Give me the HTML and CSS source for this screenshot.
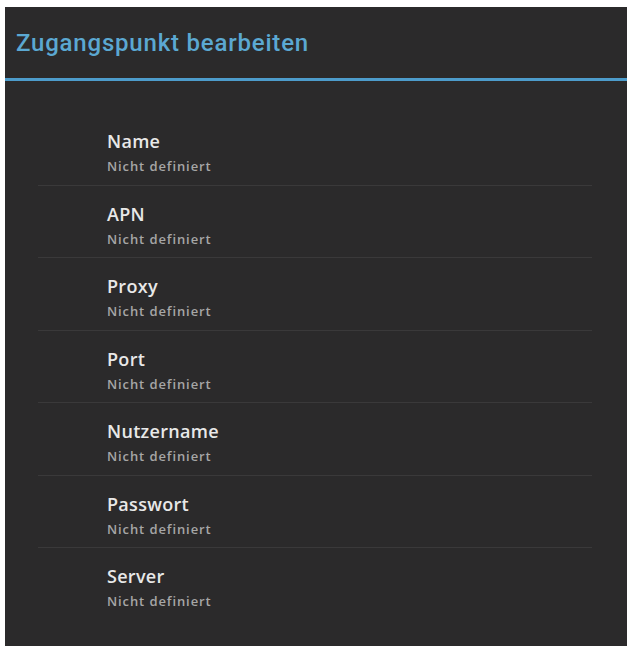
FILE: index.html
```html
<!DOCTYPE html>
<html>
<head>
  <title>Zugangspunkt bearbeiten</title>
  <link rel="stylesheet" href="styles.css">
</head>
<body>
  <div class="screen">
    <div class="action-bar">
      <h1 class="action-title">Zugangspunkt bearbeiten</h1>
    </div>

    <ul class="pref-list">
      <li class="pref">
        <div class="pref-title">Name</div>
        <div class="pref-summary">Nicht definiert</div>
      </li>
      <li class="pref">
        <div class="pref-title">APN</div>
        <div class="pref-summary">Nicht definiert</div>
      </li>
      <li class="pref">
        <div class="pref-title">Proxy</div>
        <div class="pref-summary">Nicht definiert</div>
      </li>
      <li class="pref">
        <div class="pref-title">Port</div>
        <div class="pref-summary">Nicht definiert</div>
      </li>
      <li class="pref">
        <div class="pref-title">Nutzername</div>
        <div class="pref-summary">Nicht definiert</div>
      </li>
      <li class="pref">
        <div class="pref-title">Passwort</div>
        <div class="pref-summary">Nicht definiert</div>
      </li>
      <li class="pref">
        <div class="pref-title">Server</div>
        <div class="pref-summary">Nicht definiert</div>
      </li>
    </ul>
  </div>
</body>
</html>
```

FILE: styles.css
```css
/* Grundlayout */
body {
  margin: 0;
  padding: 7px 2px 3px 5px;
  background-color: #ffffff;
  font-family: "Open Sans", "Liberation Sans", sans-serif;
}

/* Dunkles Panel */
.screen {
  height: 639px;
  background-color: #2b2a2b;
  box-sizing: border-box;
}

/* Titelleiste */
.action-bar {
  height: 71px;
  display: flex;
  align-items: center;
  padding-left: 11px;
  border-bottom: 3px solid #4d9ccb;
}

.action-title {
  margin: 0;
  font-family: Roboto, "Liberation Sans", sans-serif;
  font-size: 24px;
  font-weight: 500;
  color: #5ba8d2;
  letter-spacing: 0.8px;
}

/* Einstellungsliste */
.pref-list {
  list-style: none;
  margin: 0;
  padding: 32px 0 0;
}

.pref {
  margin: 0 35px 0 33px;
  padding: 17px 0 10.5px 69px;
  border-bottom: 1px solid #3a393a;
}

.pref:last-child {
  border-bottom: none;
}

.pref-title {
  font-size: 18px;
  line-height: 22px;
  font-weight: 600;
  letter-spacing: 0.3px;
  color: #e8e8e8;
}

.pref-summary {
  margin-top: 6px;
  font-size: 13px;
  line-height: 16px;
  font-weight: 600;
  letter-spacing: 0.9px;
  color: #a6a6a6;
}
```
